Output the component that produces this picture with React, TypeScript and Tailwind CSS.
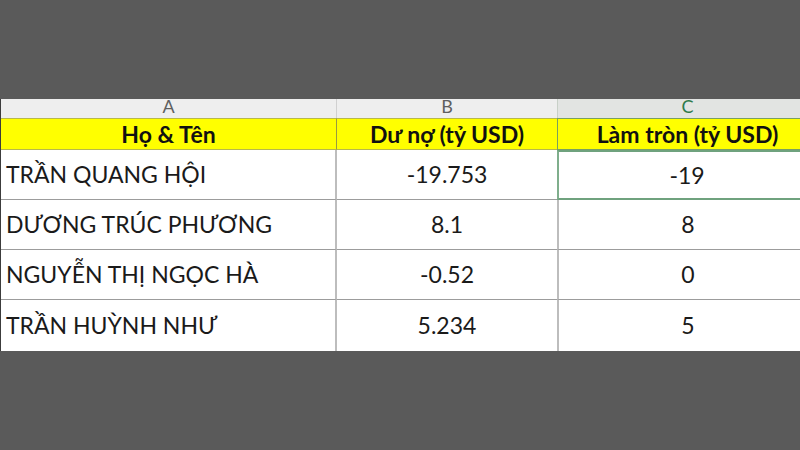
const rows = [
    { name: "TRẦN QUANG HỘI", debt: "-19.753", round: "-19" },
    { name: "DƯƠNG TRÚC PHƯƠNG", debt: "8.1", round: "8" },
    { name: "NGUYỄN THỊ NGỌC HÀ", debt: "-0.52", round: "0" },
    { name: "TRẦN HUỲNH NHƯ", debt: "5.234", round: "5" },
];

const font = { fontFamily: "Lato, 'Open Sans', sans-serif" };

function App() {
    return (
        <div className="w-[800px] h-[450px] bg-[#5a5a5a] flex flex-col overflow-hidden" style={font}>
            <div className="h-[99px] shrink-0" />
            <div className="w-[800px] overflow-hidden border-l border-[#3c3c3c]">
                <div className="grid grid-cols-[336px_220px_260px] w-[816px]">
                    {/* column letters */}
                    <div className="h-[19px] overflow-hidden bg-[#eeeeee] border-r border-[#d0d0d0] flex justify-center items-end">
                        <span className="text-[18px] leading-none text-[#5f5f5f] -translate-y-[3px]">A</span>
                    </div>
                    <div className="h-[19px] overflow-hidden bg-[#eeeeee] flex justify-center items-end">
                        <span className="text-[18px] leading-none text-[#5f5f5f] -translate-y-[3px]">B</span>
                    </div>
                    <div className="h-[19px] overflow-hidden bg-[#e2e4e2] border-l border-[#c8d0c8] flex justify-center items-end">
                        <span className="text-[18px] leading-none text-[#2f7a4a] -translate-y-[3px]">C</span>
                    </div>

                    {/* yellow header */}
                    <div className="h-[32px] bg-[#ffff00] border-t border-b border-[#b8b84a] border-r border-r-[#9a9a40] flex items-center justify-center text-[23px] font-bold text-[#111]">
                        Họ &amp; Tên
                    </div>
                    <div className="h-[32px] bg-[#ffff00] border-t border-b border-[#b8b84a] flex items-center justify-center text-[23px] font-bold text-[#111]">
                        Dư nợ (tỷ USD)
                    </div>
                    <div className="h-[32px] bg-[#ffff00] border-t border-b border-l border-[#7aa060] flex items-center justify-center text-[23px] font-bold text-[#111]">
                        Làm tròn (tỷ USD)
                    </div>

                    {rows.map((r, i) => (
                        <Row key={r.name} row={r} selected={i === 0} last={i === rows.length - 1} />
                    ))}
                </div>
            </div>
        </div>
    );
}

interface RowProps {
    row: { name: string; debt: string; round: string };
    selected: boolean;
    last: boolean;
}

function Row({ row, selected, last }: RowProps) {
    const h = last ? "h-[51px]" : "h-[50px]";
    const bottom = last ? "" : "border-b border-[#9c9c9c]";
    return (
        <>
            <div className={`${h} ${bottom} bg-white border-r-2 border-r-[#bdbdbd] flex items-center pl-[5px] text-[23px] text-[#1a1a1a]`}>
                {row.name}
            </div>
            <div className={`${h} ${bottom} bg-white flex items-center justify-center text-[23px] text-[#1a1a1a]`}>
                {row.debt}
            </div>
            <div
                className={
                    selected
                        ? `${h} bg-white border-2 border-[#6fa27e] border-l-[#7fae8c] flex items-center justify-center text-[23px] text-[#1a1a1a]`
                        : `${h} ${bottom} bg-white border-l-2 border-l-[#bdbdbd] flex items-center justify-center text-[23px] text-[#1a1a1a]`
                }
            >
                {row.round}
            </div>
        </>
    );
}

export default App;
